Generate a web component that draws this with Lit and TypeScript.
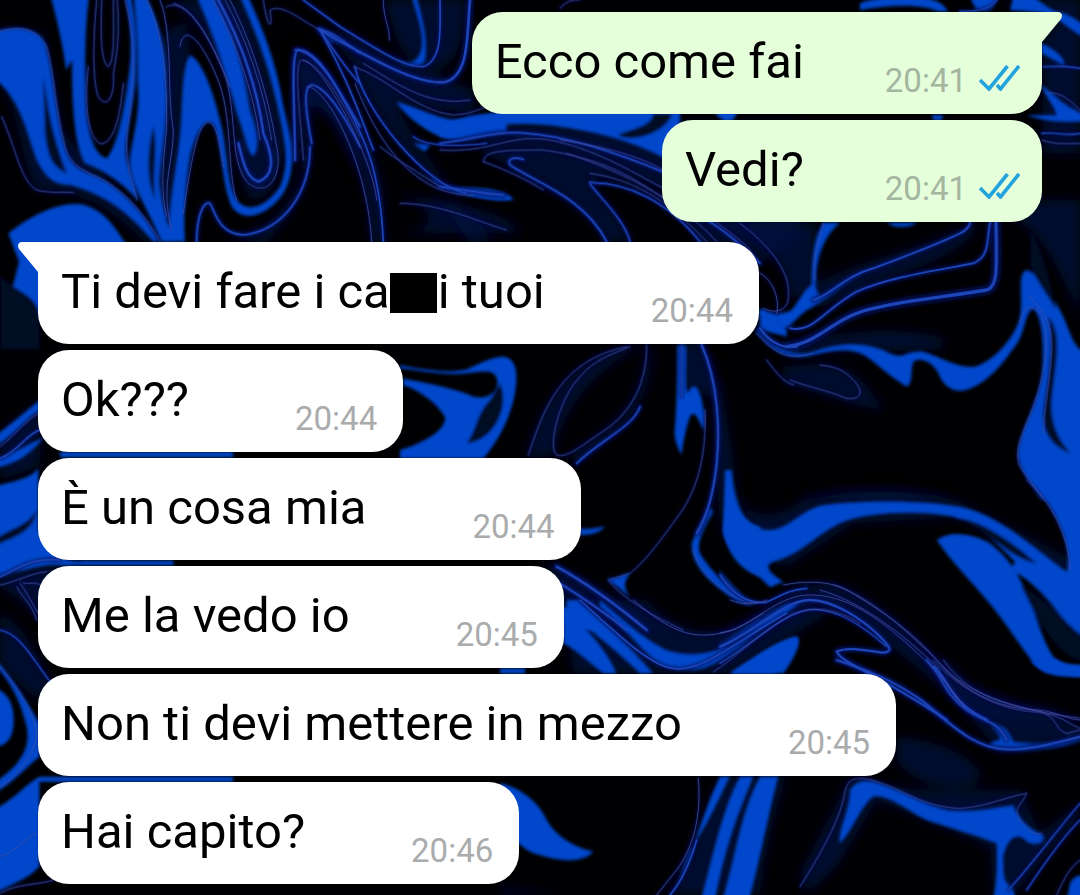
import { LitElement, html, svg, css, nothing } from "lit";
import { customElement, property } from "lit/decorators.js";

interface Message {
  text: string;
  masked?: string;
  time: string;
  own?: boolean;
  tail?: boolean;
}

interface Patch {
  x: number;
  y: number;
  glow?: string[];
  fills?: string[];
  cuts?: string[];
  bands?: [string, number][];
  lines?: string[];
}

const GROUPS: Message[][] = [
  [
    { text: "Ecco come fai", time: "20:41", own: true, tail: true },
    { text: "Vedi?", time: "20:41", own: true },
  ],
  [
    { text: "Ti devi fare i ca", masked: "i tuoi", time: "20:44", tail: true },
    { text: "Ok???", time: "20:44" },
    { text: "È un cosa mia", time: "20:44" },
    { text: "Me la vedo io", time: "20:45" },
    { text: "Non ti devi mettere in mezzo", time: "20:45" },
    { text: "Hai capito?", time: "20:46" },
  ],
];

// Every patch is drawn in thirds of a pixel, from its own corner of the wallpaper.
const PATCHES: Patch[] = [
  {
    x: 0, y: 0,
    glow: [
      "M0 235 C60 330 60 480 110 570 C200 560 330 610 430 725 L480 725 L290 500 L190 400 L130 100 L0 80Z",
      "M500 0 C560 20 640 120 690 250 C720 400 700 560 760 600 C830 600 850 480 860 400 L740 0Z",
      "M490 100 L560 60 L570 170 L530 450 L500 720 L470 600Z",
      "M885 150 C960 160 1080 400 1080 470 L1080 520 C1020 400 960 290 935 320 C930 480 930 600 800 725 L640 725 C760 720 890 640 900 480Z",
    ],
    fills: [
      "M-20 95 C60 75 110 85 135 130 C160 220 165 330 190 430 C205 490 230 510 290 530 C370 570 440 650 475 725 L460 725 C390 640 310 580 210 555 C160 555 135 530 110 480 C80 400 60 290 -20 235Z",
      "M150 -20 L268 -20 C252 100 255 250 258 330 C265 420 290 465 320 475 C355 430 375 320 388 210 C398 130 390 60 375 -20 L390 -20 C408 60 412 150 405 260 C395 350 372 420 378 470 C385 520 410 560 412 600 C370 550 310 510 255 490 C225 440 215 330 216 180 L198 210 C190 140 170 60 150 -20Z",
      "M400 -20 L435 -20 C480 70 500 150 498 250 C505 350 485 450 478 540 C480 600 500 660 520 725 L485 725 C450 640 405 580 390 500 C385 440 425 360 412 240 C415 150 410 80 400 -20Z",
      "M570 165 C605 180 640 270 665 380 C685 470 680 560 710 600 C740 635 790 630 840 560 C870 490 855 420 830 310 C800 180 760 80 715 -20 L740 -20 C790 90 830 190 850 320 C880 440 890 510 850 580 C800 650 730 670 695 620 C665 550 665 440 645 380 C620 335 585 400 570 470 C555 560 550 640 555 725 L510 725 C500 640 525 520 535 440 C550 350 540 200 570 165Z",
      "M585 -20 L640 -20 C695 90 730 200 750 330 C775 400 780 450 760 468 C740 460 735 400 710 340 C690 250 640 100 585 -20Z",
      "M25 700 C100 640 190 600 255 615 C320 635 350 690 390 750 L390 900 L100 900Z",
      "M70 750 L180 750 L180 900 C120 960 40 1000 0 960 C40 900 40 820 70 750Z",
    ],
    cuts: [
      "M130 230 C145 330 155 400 200 520 C160 500 145 480 135 400Z",
      "M460 380 C475 450 455 520 465 600 C440 540 440 460 460 380Z",
      "M0 820 C40 880 120 880 120 960 L120 1050 L0 1050Z",
    ],
    bands: [
      ["M655 0 C720 120 770 250 790 400 C825 480 820 530 775 545 C740 535 730 490 715 430", 8],
      ["M885 480 C885 340 870 150 895 150 C950 160 1000 240 1080 380", 7],
      ["M935 430 C920 350 905 260 935 255 C980 260 1040 360 1080 440", 6],
      ["M590 725 C590 650 610 600 630 610 C650 650 660 700 730 705 C850 690 930 580 930 440", 6],
      ["M955 85 C1020 105 1050 140 1080 160 M955 85 C990 130 1030 200 1080 250", 5],
    ],
    lines: [
      "M0 95 C60 75 110 85 140 140 C165 230 165 330 195 440 C210 500 260 515 310 540 C380 580 440 650 480 725",
      "M5 350 C50 450 60 540 110 570 C150 580 190 575 220 578",
      "M290 0 C280 100 275 240 295 290 C320 330 345 290 340 220 C360 120 355 50 352 0",
      "M265 200 C250 320 265 420 305 432 C350 420 360 330 370 250",
      "M305 0 C300 120 305 190 325 200 C345 180 340 80 340 0",
      "M375 0 C410 120 400 250 388 350 C370 450 385 520 412 600",
      "M440 0 C500 120 500 280 500 380 C490 500 480 560 500 650",
      "M480 0 C520 100 500 280 520 390 C520 490 480 560 515 690",
      "M500 20 C560 -10 630 110 680 240 C710 360 690 480 740 545 C800 600 850 530 830 440 C800 260 750 120 690 0",
      "M520 10 C580 20 640 130 690 260",
      "M540 140 C550 70 600 110 650 230 C700 340 680 520 710 600",
      "M640 0 C700 120 760 260 780 420",
      "M675 0 C740 120 790 260 815 420",
      "M550 640 C580 430 600 370 625 365 C650 370 660 430 670 500",
      "M790 0 C800 80 820 100 810 30 C850 10 900 60 960 90",
      "M910 480 C900 330 880 190 905 180 C960 190 1020 290 1080 410",
    ],
  },
  {
    x: 240, y: 0,
    glow: [
      "M430 0 C460 80 460 160 560 200 C660 230 670 100 680 0Z",
      "M160 150 C220 140 330 300 390 440 C440 540 430 640 435 725 L395 725 C390 560 330 440 290 370 C250 320 220 300 200 330Z",
      "M340 190 C440 260 540 320 700 300 L700 340 L470 310 C520 430 600 520 660 580 C560 540 380 330 340 190Z",
      "M470 580 C600 600 780 620 850 700 L470 700 C600 680 600 640 470 580Z",
      "M230 80 L330 100 L420 150 L700 270 L700 330 L600 330 L400 250Z",
    ],
    fills: [
      "M235 82 C260 90 290 110 310 130 L270 125Z",
      "M468 305 C540 320 600 365 680 360 C730 350 760 343 800 343 L800 400 C740 400 690 430 630 420 C560 400 500 350 468 305Z",
      "M520 430 L570 435 L555 455Z",
      "M560 520 C610 570 660 565 720 568 C770 568 800 580 822 598 C780 610 720 590 660 585 C620 570 580 550 560 520Z",
      "M470 180 C510 200 540 180 545 140 C550 100 535 60 515 -10 L530 -10 C550 60 565 130 555 180 C540 210 490 205 470 180Z",
    ],
    bands: [
      ["M600 0 C600 80 610 180 550 200 C490 200 430 160 300 80 L190 0", 5],
      ["M690 0 C680 100 690 220 620 245 C540 260 400 180 240 90", 8],
      ["M240 90 C300 200 330 260 400 450", 5],
      ["M165 150 C210 140 260 200 310 300 C380 420 420 520 430 725", 5],
      ["M345 200 C370 330 560 560 680 580", 5],
      ["M740 430 C650 440 560 440 520 410", 4],
    ],
    lines: [
      "M430 0 C430 60 450 80 448 120",
      "M340 200 C440 230 520 330 640 345 C700 340 710 330 740 320",
      "M370 190 C470 250 560 320 690 300",
      "M345 250 C420 450 540 590 700 585",
      "M420 440 C470 480 540 520 600 560",
      "M200 260 C250 250 380 470 395 725",
      "M190 180 C250 190 400 480 410 600",
      "M960 25 C980 0 1000 0 1020 0",
      "M480 610 C600 610 700 660 800 690",
    ],
  },
  {
    x: 440, y: 90,
    glow: [
      "M120 100 L1080 100 L1080 460 L780 460 C700 280 600 240 450 270 C490 340 560 400 570 455 L500 455 C430 330 300 290 210 230 L130 190Z",
      "M640 200 C740 330 860 390 960 520 L1060 460 L900 380Z",
    ],
    fills: [
      "M0 110 C60 80 100 72 200 65 L720 65 L720 230 C600 160 500 130 360 110 C260 95 130 100 70 130 L0 140Z",
      "M0 290 C80 290 180 290 212 325 C150 335 60 310 0 290Z",
      "M820 60 L890 60 C890 100 850 110 820 60Z",
    ],
    cuts: [
      "M640 70 C640 110 560 120 535 135 C580 165 690 120 695 70Z",
    ],
    bands: [
      ["M570 455 C550 370 410 260 460 278 C560 280 680 330 780 455", 5],
      ["M500 455 C430 320 290 280 210 225 C200 205 220 200 250 208", 6],
      ["M0 160 C100 150 160 120 260 130 C400 140 560 200 680 250", 6],
      ["M800 390 C870 430 940 500 960 520", 6],
      ["M0 290 C80 300 120 310 190 315", 7],
    ],
    lines: [
      "M0 180 C160 190 200 130 330 150 C480 180 600 260 680 300",
      "M130 215 C130 180 200 180 310 180 C450 200 560 240 690 340",
      "M130 215 C200 240 260 270 310 300",
      "M360 150 C500 170 600 200 670 240",
      "M380 190 C500 230 700 310 830 455",
      "M450 250 C600 270 700 350 800 455",
      "M820 390 C900 450 930 470 950 510",
    ],
  },
  {
    x: 740, y: 200,
    glow: [
      "M0 70 C80 130 140 200 150 300 L230 270 L230 70Z",
      "M130 430 C260 400 500 370 620 420 L600 450 L130 460Z",
      "M130 500 C260 480 340 500 380 560 L440 635 L330 610 L130 550Z",
      "M820 60 C900 90 960 200 1020 360 L1020 0 L900 0Z",
      "M230 250 C360 180 600 130 690 70 L720 70 C680 150 560 200 400 250 L230 330Z",
      "M160 900 C280 860 500 860 640 900Z",
    ],
    fills: [
      "M60 325 C90 345 130 345 155 330 C180 300 190 270 215 255 C215 190 220 110 250 68 L300 68 C260 100 240 150 232 190 C220 260 230 290 250 285 C300 250 340 220 380 210 C330 240 260 300 210 325 C180 340 150 385 130 385 C100 370 80 350 60 345Z",
      "M50 380 C100 450 150 470 220 455 C320 420 390 430 450 460 C500 480 490 450 550 455 C600 470 650 505 705 500 C770 480 830 400 840 350 C850 280 830 220 860 210 C900 225 940 290 970 350 C1000 420 1000 440 1040 460 L1040 900 L905 900 C870 850 830 800 835 750 C845 680 890 620 905 530 C915 430 905 350 880 325 C850 340 860 400 820 445 C770 520 720 560 670 572 C640 575 610 560 595 520 C580 490 545 470 520 485 C510 520 520 550 500 560 C450 530 420 500 380 470 C330 440 280 450 220 465 C150 485 90 450 50 395Z",
      "M440 68 L530 68 C510 85 460 85 440 68Z",
    ],
    cuts: [
      "M925 350 C970 400 945 500 935 600 C930 680 960 720 990 760 C920 730 900 680 915 600 C930 500 940 420 925 350Z",
      "M870 80 C920 180 930 240 950 330 C925 290 890 240 870 200Z",
    ],
    bands: [
      ["M140 440 C240 430 280 350 400 325 C500 300 620 290 740 270 C775 260 770 200 768 68", 10],
      ["M150 385 C220 400 250 330 350 275 C450 230 600 210 700 190 C750 170 740 120 750 68", 6],
      ["M220 300 C280 280 310 230 400 205 C520 160 600 130 660 100 C690 85 690 68 690 68", 6],
      ["M60 385 C100 440 140 445 170 440", 7],
    ],
    lines: [
      "M0 70 C80 130 150 210 145 280 C150 330 110 345 70 325",
      "M225 240 C215 170 240 110 250 70",
      "M50 400 C120 480 160 475 220 460",
      "M150 540 C200 560 260 570 320 595 C370 600 370 570 340 540 C310 510 290 500 240 495",
      "M840 370 C850 310 880 310 905 350 C935 420 910 540 880 620 C850 700 820 750 840 800 L905 890",
      "M870 290 C910 340 935 360 935 450 C930 550 910 640 910 700",
      "M80 480 C110 520 130 545 160 555",
    ],
  },
  {
    x: 860, y: 0,
    glow: ["M420 0 L660 0 L660 460 L550 460 L550 120 L610 50Z"],
    fills: [
      "M0 10 C40 -10 180 -20 220 0 C240 5 255 18 265 34 L235 34 C180 10 80 15 0 30Z",
      "M330 -10 L415 -10 C410 20 390 34 375 34 C350 30 340 20 330 -10Z",
      "M460 -10 L520 -10 C560 20 580 35 605 38 C630 45 650 60 680 80 L680 120 C620 80 600 60 560 40 C530 34 490 34 450 30Z",
      "M545 130 C590 150 620 180 610 195 L545 160Z",
      "M545 255 C580 280 610 320 680 345 L680 365 C600 370 540 360 500 345 L590 345 C580 310 555 290 545 255Z",
      "M215 345 L250 345 L245 360 L220 360Z",
    ],
    bands: [
      ["M545 400 C590 395 620 410 660 400", 4],
      ["M550 200 C590 200 610 195 660 205", 4],
      ["M300 34 C330 34 390 34 410 0", 4],
    ],
    lines: ["M545 420 C590 435 620 430 660 430", "M560 280 C600 270 640 310 660 330"],
  },
  {
    x: 400, y: 330,
    glow: [
      "M380 385 C410 250 480 100 700 45 L740 45 C640 90 500 180 460 375Z",
      "M755 45 C770 180 700 280 530 400 L500 375 C620 300 720 240 740 45Z",
      "M900 45 C960 100 980 250 1000 400 C1010 520 1040 580 1080 590 L980 640 C930 500 960 180 900 45Z",
      "M430 700 L560 750 L800 900 L490 900Z",
    ],
    fills: [
      "M0 105 C80 120 150 130 200 118 C250 95 280 80 310 80 C350 85 355 130 345 190 C330 270 290 340 250 385 L0 385 L0 360 C70 340 140 300 135 260 C110 220 60 180 10 165 L10 145 C80 160 170 175 220 200 C270 210 300 180 290 145 C280 110 230 130 170 132 C100 132 50 120 0 115Z",
      "M832 45 L858 45 C860 100 855 160 862 190 C870 170 885 160 895 180 C910 210 915 260 910 300 C895 270 885 235 870 260 C860 290 850 330 845 375 C830 350 820 320 825 290 C832 200 832 100 832 45Z",
      "M985 440 C990 520 1010 570 1080 590 L1080 740 C1020 720 980 670 970 600Z",
      "M540 595 C570 600 600 590 615 590 C600 610 570 615 540 615Z",
      "M620 745 C650 750 660 735 690 730 C670 760 670 770 690 800Z",
      "M490 830 C540 850 580 880 610 900 L500 900Z",
      "M875 640 C890 600 910 560 930 530 L940 545 C905 610 890 640 900 670 C930 720 980 770 1040 812 L1060 825 L1020 820 C960 780 870 720 875 640Z",
    ],
    cuts: ["M300 160 C330 220 290 330 200 340 C230 300 230 250 270 210Z"],
    bands: [
      ["M905 45 C955 160 960 300 950 400 C940 500 920 560 890 610", 7],
      ["M845 45 L845 200", 4],
      ["M470 710 C580 770 680 850 740 900", 8],
      ["M480 760 C560 810 630 860 680 900", 7],
      ["M530 400 C600 330 700 290 720 230", 6],
    ],
    lines: [
      "M385 375 C430 240 480 90 680 50",
      "M740 45 C740 180 680 260 600 310 C540 350 500 385 470 375 C440 350 480 200 540 140 C580 90 640 70 690 50",
      "M915 240 C920 380 890 480 840 550 C790 620 740 690 690 730 L625 750 C650 790 740 850 850 900",
      "M880 660 C900 740 980 790 1040 818 L1080 818",
    ],
  },
  {
    x: 720, y: 480,
    glow: [
      "M60 0 C70 120 150 130 250 60 C400 30 620 20 730 70 L1080 250 L1080 320 L720 110 L400 130 L200 260 L100 230Z",
      "M0 455 C120 420 180 310 340 310 C500 350 640 540 740 620 C880 680 1000 670 1080 720 L800 720 C660 640 500 460 330 380 C240 360 120 430 0 550Z",
    ],
    fills: [
      "M0 270 C30 310 70 355 110 365 L80 375 C50 355 20 320 0 300Z",
      "M15 -30 L35 -30 C45 90 80 150 150 150 C210 145 240 90 310 75 C430 60 640 60 740 85 C860 120 960 220 1040 275 C1060 200 1010 80 920 -10 L1100 -10 L1100 475 C1040 440 1010 390 960 330 C890 250 800 140 700 110 C600 90 450 95 370 125 C290 160 250 220 160 245 C120 260 170 290 190 305 L150 322 C100 270 30 220 10 160Z",
      "M650 180 C690 150 760 160 810 190 C860 230 890 270 915 330 C950 400 960 470 1000 530 C1020 550 1050 555 1100 555 L1100 590 C1030 590 980 590 950 560 C900 500 860 430 800 360 C740 290 690 240 650 180Z",
      "M0 490 C60 460 140 390 220 365 C180 400 60 480 0 515Z",
      "M30 580 C90 540 160 490 230 470 C250 480 220 540 190 580Z",
      "M870 270 C930 290 990 370 1060 440 L1000 300 L900 220Z",
    ],
    cuts: [
      "M720 115 C800 130 880 190 950 250 C900 240 870 215 820 180Z",
      "M905 320 C960 330 1020 420 1100 480 L1100 545 C1010 540 960 430 905 320Z",
    ],
    bands: [
      ["M0 500 C100 460 190 360 270 360 C340 360 430 420 480 470 C510 500 520 515 490 518 C430 510 380 500 350 515 C360 540 430 570 500 610 C570 650 620 680 680 720", 7],
      ["M0 550 C100 490 200 390 280 388 C360 390 430 440 500 500", 4],
      ["M0 285 C40 345 80 370 135 368 C180 350 200 330 260 325", 5],
      ["M640 560 C690 600 680 660 800 720", 8],
    ],
    lines: [
      "M0 458 C90 450 160 350 260 345 C380 340 480 420 560 490 C650 570 690 620 740 690",
      "M190 315 C260 300 340 305 380 330 C500 400 580 460 650 540 C740 650 860 690 960 690 C1020 700 1050 720 1080 720",
      "M340 315 C460 350 600 490 680 570 C760 650 900 690 1080 715",
      "M300 330 C440 370 580 490 660 570",
      "M920 0 C990 60 1050 170 1050 270",
    ],
  },
  {
    x: 500, y: 600,
    glow: [
      "M190 0 L440 0 C520 90 620 110 720 80 L860 0 L1000 30 L700 220 L220 220Z",
      "M700 530 L860 530 C820 640 790 780 780 885 L500 885 C600 750 590 620 680 530Z",
      "M0 860 L200 885 L0 885Z",
    ],
    fills: [
      "M190 20 C240 70 310 130 350 220 L310 220 C270 190 230 150 190 130Z",
      "M200 0 L235 0 C310 70 400 150 460 220 L420 220 C360 160 270 90 200 30Z",
      "M300 0 C360 50 420 110 500 150 C560 170 620 165 680 140 C740 110 800 50 860 15 L900 10 C820 60 740 130 660 180 C600 220 550 215 500 200 C420 160 380 80 300 20Z",
      "M690 220 C760 180 830 120 890 110 C900 130 870 180 820 220Z",
      "M0 205 L75 205 L75 220 L0 220Z",
      "M0 550 C60 560 120 610 140 660 C170 710 220 740 280 755 C250 790 180 785 120 765 C60 750 60 720 0 690Z",
      "M660 530 L690 530 C650 610 620 680 570 750 L530 850 C590 740 610 630 660 530Z",
      "M720 530 L760 530 C720 630 680 720 645 900 L603 900 C640 760 670 620 720 530Z",
      "M780 530 L835 530 C810 620 780 780 747 900 L667 900 C710 760 720 640 780 530Z",
    ],
    bands: [
      ["M240 0 C340 90 450 200 520 205 C600 220 700 130 860 40", 5],
      ["M590 720 C570 790 540 850 510 885", 5],
    ],
    lines: [
      "M400 0 C470 60 540 110 620 105 C700 100 720 80 790 40",
      "M640 215 C700 180 800 80 880 40 C940 20 1000 20 1080 70",
      "M595 535 C605 650 580 740 530 810 L470 885",
      "M690 0 C740 20 780 10 800 0",
    ],
  },
  {
    x: 800, y: 660,
    glow: [
      "M290 230 C400 240 520 280 545 350 C520 400 340 390 290 300Z",
      "M150 355 L360 390 L660 390 L720 520 L840 430 L840 470 L640 705 L580 705 L570 560 L230 420 L110 620 L20 705 L0 640Z",
      "M380 0 L440 0 C560 150 740 140 840 200 L840 245 L600 275 L440 90Z",
    ],
    fills: [
      "M690 0 L770 0 C790 15 820 18 860 18 L860 50 C770 45 720 35 690 0Z",
      "M570 190 C610 190 625 210 640 245 C700 255 780 245 860 235 C760 275 680 275 600 268 C560 260 560 245 600 240 C600 220 580 210 570 190Z",
      "M150 390 C170 355 210 360 250 375 C310 395 360 430 440 450 C520 460 590 440 640 435 C650 470 690 510 730 525 C740 550 700 560 680 545 C650 510 620 540 610 590 C610 640 610 670 635 680 L650 720 L580 720 C595 640 590 590 590 550 C540 530 440 500 380 480 C320 450 260 400 220 410 C180 440 160 510 120 550 C110 520 150 450 150 390Z",
      "M810 670 C820 650 830 645 860 645 L860 720 L800 720Z",
    ],
    bands: [
      ["M110 0 C200 30 280 60 370 125 C450 190 520 265 620 268 C700 270 780 245 840 230", 7],
      ["M380 0 C430 50 430 100 500 150 C560 190 590 180 620 240", 6],
      ["M625 690 C690 620 780 500 840 430", 4],
      ["M680 690 C740 600 800 520 840 480", 4],
    ],
    lines: [
      "M0 680 C50 600 110 500 130 420 C140 360 150 355 190 355 C290 370 350 440 480 445 C560 440 620 410 680 400 C670 430 640 440 655 470 C670 500 700 530 725 520",
      "M430 0 C500 100 600 130 700 150 C780 165 760 210 800 220 L840 210",
      "M400 0 C480 90 600 150 700 155 C790 165 800 190 840 205",
      "M770 705 C790 660 810 620 840 600",
    ],
  },
  {
    x: 0, y: 400,
    glow: [
      "M0 100 L120 0 L120 200 L0 240Z",
      "M0 640 C60 660 110 760 150 850 L110 900 L0 800Z",
      "M0 510 L250 485 L120 660 L60 600 L0 560Z",
    ],
    fills: [
      "M-20 110 C40 70 80 30 120 0 L120 30 C80 50 40 110 -20 140Z",
      "M-20 175 C40 170 80 130 130 115 C90 160 60 190 -20 205Z",
      "M-20 260 C60 240 90 235 115 205 L115 390 C150 470 200 490 250 482 L520 482 L520 496 L180 496 C120 490 60 520 -20 530Z",
      "M-20 770 C50 850 90 920 118 970 L118 1070 C80 1100 40 1150 -20 1180 L-20 1150 C70 1090 90 1040 80 980 C60 900 30 840 -20 790Z",
      "M-20 860 C30 880 45 920 40 980 C35 1020 15 1040 -20 1040Z",
      "M-20 1230 C40 1200 80 1150 118 1130 L700 1130 L700 1145 L118 1145 L118 1400 C80 1440 40 1450 -20 1480Z",
      "M180 156 L700 156 L700 172 L180 172Z",
    ],
    cuts: ["M-20 420 C40 380 80 380 110 330 C100 400 40 410 -20 440Z"],
    bands: [
      ["M0 175 C60 150 80 100 120 90", 5],
      ["M0 690 C60 700 100 780 150 845", 4],
      ["M0 530 C50 510 90 470 180 480", 5],
    ],
    lines: [
      "M0 140 C40 110 80 60 115 40",
      "M50 560 C70 600 90 600 110 660",
      "M60 550 C90 590 100 620 115 640",
      "M70 550 C100 550 110 545 130 560",
      "M0 555 C50 545 90 520 140 515",
      "M0 800 C50 860 100 930 110 1000 C110 1060 40 1140 0 1160",
      "M0 1370 C40 1360 80 1310 110 1300",
      "M0 1480 C50 1450 120 1455 160 1440",
    ],
  },
  {
    x: 400, y: 200,
    glow: ["M90 0 C200 10 250 80 280 125 L200 125 C180 60 120 20 90 0Z", "M840 430 C850 480 840 500 845 560 L960 600 L910 430Z"],
    fills: ["M1080 330 C1110 350 1150 370 1160 390 L1160 410 C1130 400 1100 400 1080 380Z"],
    lines: ["M1080 220 C1120 240 1140 300 1130 340"],
  },
];

@customElement("chat-wallpaper")
export class ChatWallpaper extends LitElement {
  static styles = css`
    :host {
      display: block;
      contain: size;
      overflow: hidden;
      background: #000003;
    }
    .art {
      display: block;
      width: 100%;
      height: 100%;
      fill: none;
      stroke-linecap: round;
      stroke-linejoin: round;
    }
    .glow { fill: #03103c; opacity: 0.75; }
    .fill { fill: #0546cb; }
    .cut { fill: #010722; }
    .halo { stroke: #051664; opacity: 0.75; }
    .band { stroke: #1f45b8; }
    .line { stroke: #4a4fa0; stroke-width: 3; opacity: 0.75; }
    .edge { stroke: #050f55; stroke-width: 10; opacity: 0.7; }
  `;

  render() {
    return html`
      <svg class="art" viewBox="0 0 1080 895" preserveAspectRatio="xMidYMid slice" aria-hidden="true">
        <defs>
          <filter id="wide" x="-20%" y="-20%" width="140%" height="140%"><feGaussianBlur stdDeviation="18" /></filter>
          <filter id="soft" x="-20%" y="-20%" width="140%" height="140%"><feGaussianBlur stdDeviation="5" /></filter>
          <filter id="fine" x="-20%" y="-20%" width="140%" height="140%"><feGaussianBlur stdDeviation="2" /></filter>
        </defs>
        ${PATCHES.map((p) => this.layer(p, svg`<g filter="url(#wide)">${(p.glow ?? []).map((d) => svg`<path class="glow" d=${d} />`)}</g>`))}
        ${PATCHES.map((p) =>
          this.layer(
            p,
            svg`<g filter="url(#soft)">
              ${(p.lines ?? []).map((d) => svg`<path class="edge" d=${d} />`)}
              ${(p.fills ?? []).map((d) => svg`<path class="fill" d=${d} />`)}
              ${(p.cuts ?? []).map((d) => svg`<path class="cut" d=${d} />`)}
              ${(p.bands ?? []).map(([d, w]) => svg`<path class="halo" d=${d} stroke-width=${w * 3} />`)}
            </g>`,
          ),
        )}
        ${PATCHES.map((p) =>
          this.layer(
            p,
            svg`<g filter="url(#fine)">
              ${(p.bands ?? []).map(([d, w]) => svg`<path class="band" d=${d} stroke-width=${w} />`)}
              ${(p.lines ?? []).map((d) => svg`<path class="line" d=${d} />`)}
            </g>`,
          ),
        )}
      </svg>
    `;
  }

  private layer(p: Patch, content: unknown) {
    return svg`<g transform="translate(${p.x} ${p.y}) scale(0.33333)">${content}</g>`;
  }
}

@customElement("chat-bubble")
export class ChatBubble extends LitElement {
  @property({ attribute: false }) message!: Message;

  static styles = css`
    :host {
      display: flex;
    }
    .bubble {
      position: relative;
      display: flex;
      align-items: flex-end;
      box-sizing: border-box;
      min-height: 102px;
      max-width: 100%;
      padding: 16px 26px 10px 23px;
      border-radius: 31px;
      background: #fff;
      color: #000;
    }
    .own {
      margin-left: auto;
      padding-right: 22px;
      background: #e6ffdb;
    }
    .first { border-top-left-radius: 0; }
    .own.first { border-top-left-radius: 31px; border-top-right-radius: 0; }
    .text {
      margin: 0;
      padding-bottom: 10px;
      font-size: 49px;
      line-height: 64px;
    }
    .mask {
      display: inline-block;
      width: 47px;
      height: 40px;
      margin-right: 1px;
      vertical-align: -5px;
      background: #000;
    }
    .meta {
      display: flex;
      align-items: center;
      gap: 12px;
      margin-left: 106px;
      color: #a9abac;
      font-size: 33px;
      line-height: 46px;
    }
    .own .meta {
      margin-left: 81px;
      color: #a4b5a0;
    }
    .ticks {
      display: block;
      width: 41px;
      height: 26px;
      margin-bottom: 6px;
      fill: none;
      stroke: #22a3dc;
      stroke-width: 3.6;
    }
    .tail {
      position: absolute;
      top: 0;
      right: 100%;
      width: 20px;
      height: 31px;
      fill: #fff;
    }
    .own .tail {
      right: auto;
      left: 100%;
      fill: #e6ffdb;
    }
  `;

  render() {
    const { text, masked, time, own, tail } = this.message;
    return html`
      <div class="bubble ${own ? "own" : ""} ${tail ? "first" : ""}">
        ${tail
          ? html`<svg class="tail" viewBox="0 0 20 31" aria-hidden="true">
              <path d=${own ? "M0 0H16C20 0 21 4 19 7L0 30Z" : "M20 0H4C0 0 -1 4 1 7L20 30Z"} />
            </svg>`
          : nothing}
        <p class="text">${text}${masked ? html`<span class="mask"></span>${masked}` : nothing}</p>
        <div class="meta">
          <time>${time}</time>
          ${own
            ? html`<svg class="ticks" viewBox="0 0 41 26" aria-hidden="true">
                <path d="M1 15L10 24L28.500 1M18 20L21.500 24L40 1" />
              </svg>`
            : nothing}
        </div>
      </div>
    `;
  }
}

@customElement("app-root")
export class AppRoot extends LitElement {
  static styles = css`
    :host {
      display: grid;
      min-height: 100vh;
      font-family: Roboto, "Liberation Sans", sans-serif;
    }
    .wallpaper,
    .chat {
      grid-area: 1 / 1;
      min-width: 0;
    }
    .chat {
      position: relative;
      display: flex;
      flex-direction: column;
      gap: 20px;
      padding: 12px 38px 11px;
    }
    .group {
      display: flex;
      flex-direction: column;
      gap: 6px;
    }
  `;

  render() {
    return html`
      <chat-wallpaper class="wallpaper"></chat-wallpaper>
      <main class="chat">
        ${GROUPS.map(
          (group) => html`<section class="group">
            ${group.map((message) => html`<chat-bubble .message=${message}></chat-bubble>`)}
          </section>`,
        )}
      </main>
    `;
  }
}
